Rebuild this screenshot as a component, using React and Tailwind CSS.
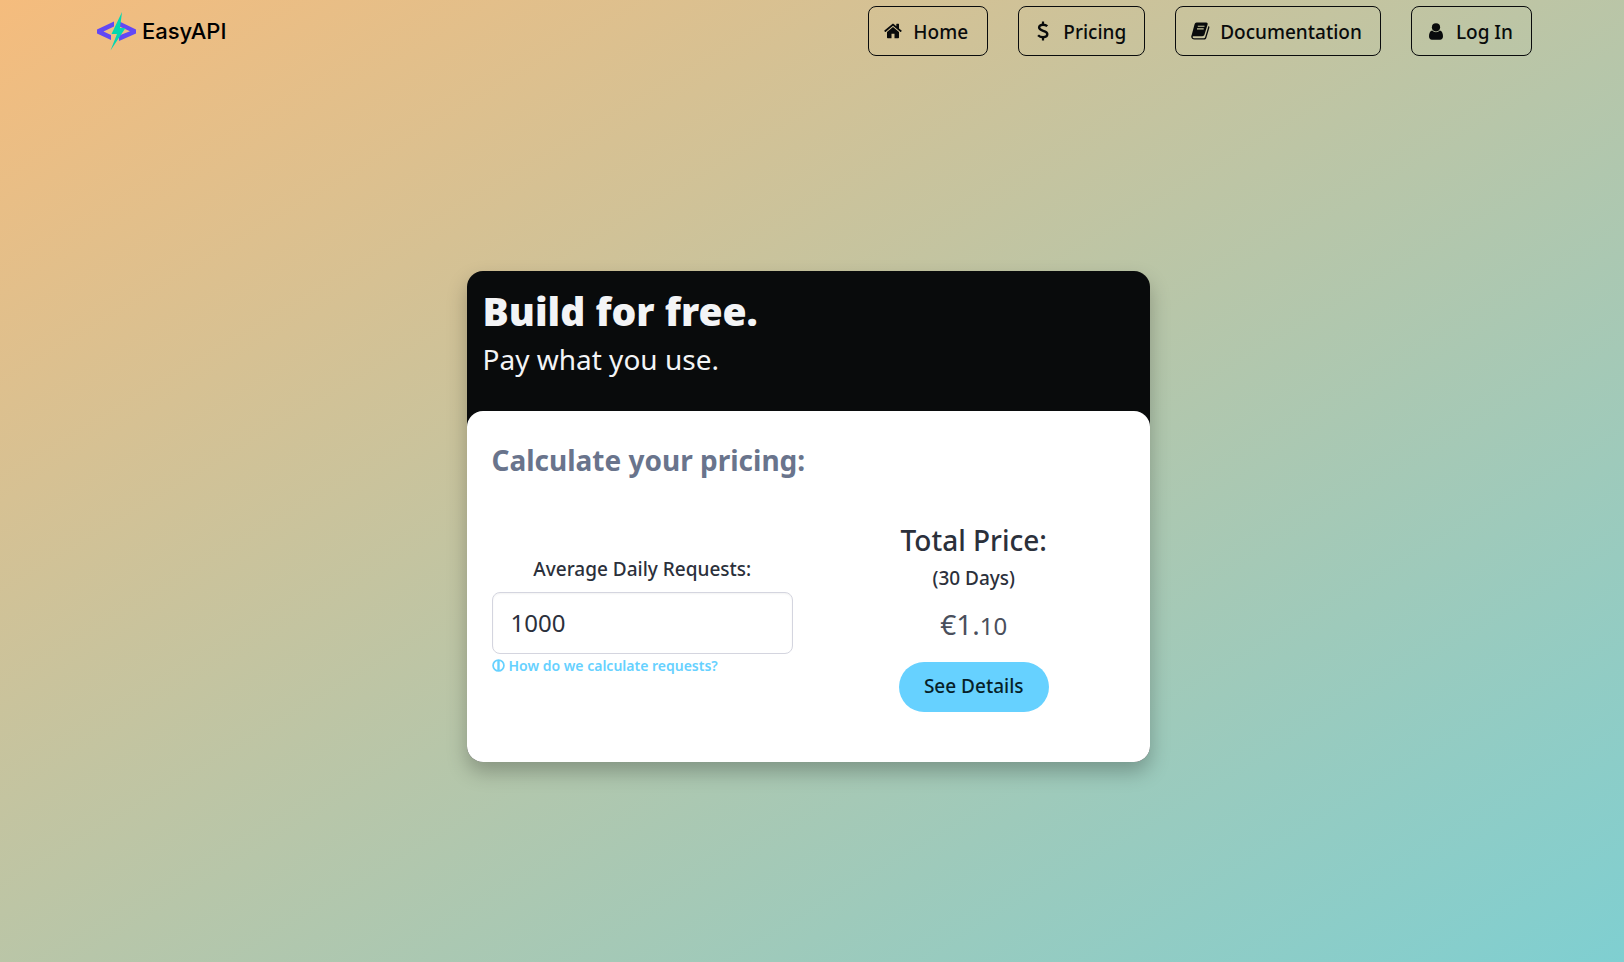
import { useState } from "react";

const PRICE_PER_REQUEST = 0.0011;

function HomeIcon() {
  return (
    <svg viewBox="0 0 18 16" className="h-4 w-[18px]" fill="currentColor" aria-hidden="true">
      <path d="M9 4 3 9v5.5c0 .4.3.7.7.7h3.8v-4.4h3v4.4h3.8c.4 0 .7-.3.7-.7V9L9 4z" />
      <path d="M17.6 7.6 15 5.4V1.2c0-.2-.2-.4-.4-.4h-1.9c-.2 0-.4.2-.4.4v2L10 1.2c-.6-.5-1.4-.5-2 0L.4 7.6c-.2.1-.2.4 0 .5l.6.8c.1.2.4.2.5 0L9 2.700l7.500 6.200c.1.200.4.200.5 0l.600-.8c.200-.100.200-.400 0-.5z" />
    </svg>
  );
}

function DollarIcon() {
  return (
    <svg viewBox="0 0 12 20" className="h-5 w-3" fill="none" stroke="currentColor" aria-hidden="true">
      <path d="M10.3 5.200C9.300 4.300 7.800 3.700 6 3.700c-2.200 0-3.900 1.100-3.900 2.900 0 4 8.200 2.400 8.200 6.500 0 1.900-1.800 3.100-4.200 3.100-2.100 0-3.900-.8-5-2" strokeWidth="2.4" />
      <path d="M6 .5v3.500M6 16v3.500" strokeWidth="2.2" />
    </svg>
  );
}

function BookIcon() {
  return (
    <svg viewBox="0 0 19 18" className="h-[18px] w-[19px]" aria-hidden="true">
      <path d="M5.600.5h9.600c1.100 0 1.700.8 1.400 1.900l-3.100 10.200c-.3 1-1.200 1.700-2.200 1.700H2.700c-.8 0-1.200.4-1 1 .2.700.9 1 1.800 1h9.300c.6 0 1.100-.4 1.300-1L17.500 4c.8.400 1.100 1.100.8 2l-3 9.900c-.3 1-1.300 1.700-2.300 1.700H3.500C1.700 17.600.2 16.300.2 14.600c0-.6.3-1 .5-1.600L3.500 2.500C3.900 1.300 4.600.5 5.600.5z" fill="currentColor" />
      <path d="M6.800 4.200h6.700M6 6.900h6.700" stroke="#c9c69d" strokeWidth="1.100" />
    </svg>
  );
}

function UserIcon() {
  return (
    <svg viewBox="0 0 14 17" className="h-[17px] w-3.5" fill="currentColor" aria-hidden="true">
      <circle cx="7" cy="4.300" r="4.100" />
      <path d="M3.300 7.600C1 7.900 0 10.400 0 13.300 0 15.400 1.200 16.800 2.900 16.800h8.200c1.700 0 2.900-1.400 2.900-3.500 0-2.900-1-5.400-3.300-5.700C9.700 8.700 8.500 9.300 7 9.300s-2.700-.6-3.700-1.700z" />
    </svg>
  );
}

function InfoIcon() {
  return (
    <svg viewBox="0 0 12 12" className="size-[13px]" fill="none" stroke="currentColor" aria-hidden="true">
      <circle cx="6" cy="6" r="5" strokeWidth="1.6" />
      <path d="M6 1v10" strokeWidth="2.2" />
    </svg>
  );
}

function Logo() {
  return (
    <a href="#" className="flex items-center gap-1.5 pl-[5px] text-black">
      <svg viewBox="0 -1 39 39" className="size-[39px]" aria-hidden="true">
        <path d="M17 8.500 0 16.500v4L14 27v-5L6.500 18.500 17 13.500z" fill="#6248f5" />
        <path d="M22.500 8.500 39 16.500v4L22 28v-5.500l11-4.200-10.500-4.800z" fill="#6248f5" />
        <path d="M25-1 14.500 21H20l-6.500 16.500L28.500 15H23z" fill="#05d6b0" />
      </svg>
      <span className="font-['Inter'] text-[22px] font-medium leading-[30px]">EasyAPI</span>
    </a>
  );
}

const links = [
  { label: "Home", icon: <HomeIcon /> },
  { label: "Pricing", icon: <DollarIcon /> },
  { label: "Documentation", icon: <BookIcon /> },
  { label: "Log In", icon: <UserIcon /> },
];

export default function App() {
  const [requests, setRequests] = useState("1000");
  const [whole, cents] = (Number(requests) * PRICE_PER_REQUEST).toFixed(2).split(".");

  return (
    <div className="flex min-h-screen flex-col bg-linear-to-br/srgb from-[#f5bc7d] to-[#7fcfd1] font-['Noto_Sans',sans-serif] text-[#2b303b]">
      <header className="mx-auto flex w-full max-w-[1440px] items-center justify-between pt-1.5 pb-3.5">
        <Logo />
        <nav className="flex gap-[30px]">
          {links.map((link) => (
            <a
              key={link.label}
              href="#"
              className="flex h-[50px] min-w-[120px] items-center gap-2 rounded-lg border border-[#090b0c] pt-0.5 pr-[18px] pl-3 text-[19px] font-medium text-[#090b0c]"
            >
              <span className="flex w-6 justify-center pb-0.5">{link.icon}</span>
              {link.label}
            </a>
          ))}
        </nav>
      </header>

      <main className="flex flex-1 items-center justify-center pr-2">
        <div className="w-full max-w-[683px] rounded-2xl bg-[#090b0c] shadow-[0_10px_20px_rgba(0,0,0,0.25)]">
          {/* banner */}
          <div className="h-[140px] px-4 pt-4 text-[#f3f4f6]">
            <h1 className="text-[39px] font-black leading-[48px]">Build for free.</h1>
            <p className="text-[28px] leading-[48px]">Pay what you use.</p>
          </div>

          {/* calculator */}
          <div className="rounded-2xl bg-white px-[25px] pt-[25px] pb-[50px]">
            <h2 className="text-[28px] font-bold leading-[48px] text-[#69748c]">Calculate your pricing:</h2>
            <div className="mt-9 grid grid-cols-2 items-center gap-[30px]">
              <div>
                <label htmlFor="requests" className="block text-center text-[19px] font-medium leading-[30px]">
                  Average Daily Requests:
                </label>
                <input
                  id="requests"
                  type="text"
                  value={requests}
                  onChange={(e) => setRequests(e.target.value)}
                  className="mt-2 h-[62px] w-full rounded-lg border border-[#d4d5df] px-[18px] text-[24px] shadow-[inset_0_1px_2px_rgba(10,10,10,0.05)]"
                />
                <a href="#" className="flex items-center gap-1 text-[14px] font-semibold leading-6 text-[#66d1ff]">
                  <InfoIcon />
                  How do we calculate requests?
                </a>
              </div>

              <div className="flex flex-col items-center">
                <h3 className="text-[28px] font-medium leading-[40px]">Total Price:</h3>
                <p className="text-[19px] font-medium leading-[36px]">(30 Days)</p>
                <p className="mb-2 text-[28px] leading-[56px] text-[#4a4f5c]">
                  €{whole}.<span className="text-[24px]">{cents}</span>
                </p>
                <button className="h-[50px] rounded-full bg-[#66d1ff] px-[25px] text-[19px] font-medium text-[#061f29]">
                  See Details
                </button>
              </div>
            </div>
          </div>
        </div>
      </main>
    </div>
  );
}
